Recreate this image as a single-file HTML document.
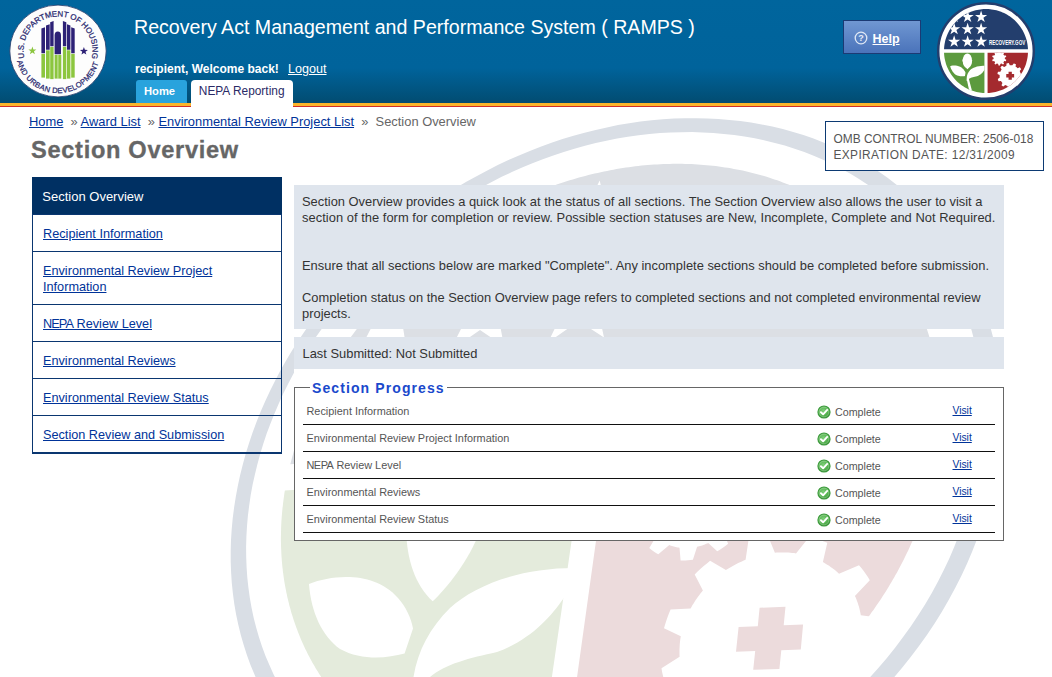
<!DOCTYPE html>
<html><head><meta charset="utf-8"><title>RAMPS - Section Overview</title>
<style>
*{margin:0;padding:0;box-sizing:border-box}
html,body{width:1052px;height:677px;overflow:hidden;background:#fff}
body{position:relative;font-family:"Liberation Sans",sans-serif;color:#333}
.abs{position:absolute;white-space:nowrap}
a{color:#003399;text-decoration:underline}
#hdr{position:absolute;left:0;top:0;width:1052px;height:103px;background:linear-gradient(#00659d 0px,#00639b 68px,#024c71 103px)}
#orange{position:absolute;left:0;top:103px;width:1052px;height:3px;background:#fbb42a}
#red{position:absolute;left:0;top:106px;width:1052px;height:1px;background:#cf2e2a}
#wm{position:absolute;left:0;top:0;width:1052px;height:677px}
#title{left:134px;top:14px;font-size:19.6px;color:#fff;line-height:26px}
#welcome{left:135px;top:61px;font-size:12px;font-weight:bold;color:#fff;line-height:16px}
#logout{left:288px;top:61px;font-size:12.6px;color:#fff;line-height:16px}
#logout a{color:#fff}
#tabhome{left:136px;top:80px;width:51px;height:23px;background:#29a3dd;border-radius:3px 3px 0 0}
#tabhome span{position:absolute;left:8px;top:3px;font-size:11.2px;font-weight:bold;color:#fff;line-height:16px}
#tabnepa{left:191px;top:80px;width:102px;height:27px;background:#fff;border-radius:4px 4px 0 0}
#tabnepa span{position:absolute;left:7.8px;top:3px;font-size:11.9px;color:#2a2a66;line-height:16px}
#help{left:843px;top:20px;width:78px;height:34px;border:1px solid #1b3a74;background:linear-gradient(#7097d2,#4a73ba)}
#bc{left:29px;top:114px;font-size:12.9px;line-height:16px;color:#666}
#h1{left:31px;top:135px;font-size:23.6px;font-weight:bold;color:#666;-webkit-text-stroke:0.35px #666;letter-spacing:0.7px;line-height:30px}
#omb{left:825px;top:121px;width:219px;height:50px;border:1px solid #0c3a73;background:#fff;font-size:11.9px;color:#555;line-height:15.5px;padding:10px 0 0 7.5px}
#nav{left:32px;top:177px;width:250px;height:277px;border-left:1px solid #0a3670;border-right:1px solid #0a3670;border-bottom:2px solid #0a3670}
#nav .hd{position:absolute;left:-1px;top:0;width:250px;height:37px;background:#003063}
#nav .hd span{position:absolute;left:10.3px;top:12px;font-size:13px;color:#fff;line-height:16px}
.ni{position:absolute;left:0;width:248px;border-top:1px solid #0a3670}
.ni a{position:absolute;left:10px;top:11px;font-size:12.7px;line-height:16px;white-space:normal}
#info{left:294px;top:185px;width:710px;height:144px;background:#dfe5ed;font-size:12.9px;line-height:16px;color:#333;padding:9px 0 0 8px;white-space:normal}
#last{left:294px;top:337px;width:710px;height:32px;background:#dfe5ed;font-size:12.9px;line-height:16px;color:#333;padding:8.5px 0 0 8.5px}
#fs{left:294px;top:387px;width:710px;height:154px;border:1px solid #666;background:#fff}
#legend{left:310px;top:379px;padding:0 2px 0 2px;background:#fff;font-size:14px;font-weight:bold;color:#1a49cc;letter-spacing:1.1px;line-height:18px}
.row{position:absolute;left:303px;width:692px;height:27px;border-bottom:1px solid #111}
.row .t{position:absolute;left:3.5px;top:5.7px;font-size:10.9px;color:#555;line-height:14px}
.row .c{position:absolute;left:532px;top:7.2px;font-size:10.7px;color:#555;line-height:14px}
.row .ic{position:absolute;left:514px;top:6.8px;width:14px;height:14px}
.row .v{position:absolute;left:649.5px;top:5.6px;font-size:10.3px;line-height:14px}
</style></head>
<body>
<svg id="wm" width="1052" height="677"><defs><clipPath id="c_flag"><path d="M290.3 464.3 L291.1 461.3 L291.9 458.3 L292.7 455.3 L293.5 452.3 L294.4 449.3 L295.3 446.4 L296.3 443.4 L297.2 440.4 L298.2 437.4 L299.2 434.5 L300.3 431.5 L301.4 428.6 L302.5 425.6 L303.6 422.7 L304.8 419.8 L306.0 416.9 L307.2 413.9 L308.4 411.0 L309.7 408.1 L311.0 405.2 L312.3 402.3 L313.6 399.5 L315.0 396.6 L316.4 393.7 L317.8 390.9 L319.3 388.0 L320.8 385.2 L322.3 382.4 L323.8 379.6 L325.4 376.8 L326.9 374.0 L328.5 371.2 L330.2 368.4 L331.8 365.6 L333.5 362.9 L335.2 360.1 L336.9 357.4 L338.7 354.7 L340.4 352.0 L342.2 349.3 L344.1 346.6 L345.9 343.9 L347.8 341.3 L349.7 338.6 L351.6 336.0 L353.5 333.4 L355.5 330.8 L357.4 328.2 L359.4 325.6 L361.5 323.0 L363.5 320.5 L365.6 317.9 L367.6 315.4 L369.8 312.9 L371.9 310.4 L374.0 307.9 L376.2 305.5 L378.4 303.0 L380.6 300.6 L382.8 298.2 L385.1 295.8 L387.3 293.4 L389.6 291.0 L391.9 288.7 L394.2 286.3 L396.6 284.0 L398.9 281.7 L401.3 279.5 L403.7 277.2 L406.1 274.9 L408.6 272.7 L411.0 270.5 L413.5 268.3 L416.0 266.1 L418.5 264.0 L421.0 261.8 L423.5 259.7 L426.1 257.6 L428.7 255.6 L431.2 253.5 L433.8 251.5 L436.5 249.4 L439.1 247.4 L441.7 245.4 L444.4 243.5 L447.1 241.5 L449.8 239.6 L452.5 237.7 L455.2 235.9 L457.9 234.0 L460.7 232.2 L463.4 230.3 L466.2 228.5 L469.0 226.8 L471.8 225.0 L474.6 223.3 L477.4 221.6 L480.2 219.9 L483.1 218.2 L485.9 216.6 L488.8 215.0 L491.7 213.4 L494.6 211.8 L497.5 210.3 L500.4 208.7 L503.3 207.2 L506.2 205.8 L509.2 204.3 L512.1 202.9 L515.1 201.5 L518.1 200.1 L521.1 198.7 L524.0 197.4 L527.0 196.1 L530.0 194.8 L533.1 193.5 L536.1 192.3 L539.1 191.1 L542.1 189.9 L545.2 188.7 L548.2 187.6 L551.3 186.5 L554.3 185.4 L557.4 184.3 L560.5 183.3 L563.6 182.3 L566.6 181.3 L569.7 180.3 L572.8 179.4 L575.9 178.5 L579.0 177.6 L582.1 176.8 L585.2 175.9 L588.4 175.1 L591.5 174.3 L594.6 173.6 L597.7 172.9 L600.8 172.2 L604.0 171.5 L607.1 170.9 L610.2 170.3 L613.4 169.7 L616.5 169.1 L619.6 168.6 L622.8 168.1 L625.9 167.6 L629.0 167.2 L632.2 166.7 L635.3 166.3 L638.4 166.0 L641.6 165.6 L644.7 165.3 L647.8 165.1 L651.0 164.8 L654.1 164.6 L657.2 164.4 L660.4 164.2 L663.5 164.1 L666.6 164.0 L669.7 163.9 L672.8 163.8 L675.9 163.8 L679.0 163.8 L682.1 163.8 L685.2 163.9 L688.3 164.0 L691.4 164.1 L694.5 164.3 L697.5 164.4 L700.6 164.7 L703.7 164.9 L706.7 165.2 L709.8 165.4 L712.8 165.8 L715.8 166.1 L718.8 166.5 L721.9 166.9 L724.9 167.4 L727.9 167.8 L730.9 168.3 L733.8 168.9 L736.8 169.4 L739.8 170.0 L742.7 170.6 L745.7 171.3 L748.6 171.9 L751.5 172.7 L754.4 173.4 L757.3 174.2 L760.2 174.9 L763.1 175.8 L765.9 176.6 L768.8 177.5 L771.6 178.4 L774.4 179.4 L777.2 180.3 L780.0 181.3 L782.8 182.4 L785.5 183.4 L788.3 184.5 L791.0 185.6 L793.7 186.8 L796.4 187.9 L799.1 189.1 L801.8 190.4 L804.4 191.6 L807.1 192.9 L809.7 194.2 L812.3 195.6 L814.9 197.0 L817.5 198.4 L820.0 199.8 L822.5 201.3 L825.0 202.8 L827.5 204.3 L830.0 205.8 L832.4 207.4 L834.9 209.0 L837.3 210.7 L839.7 212.3 L842.0 214.0 L844.4 215.7 L846.7 217.5 L849.0 219.2 L851.3 221.0 L853.6 222.9 L855.8 224.7 L858.0 226.6 L860.2 228.5 L862.4 230.4 L864.5 232.4 L866.6 234.4 L868.7 236.4 L870.8 238.5 L872.8 240.5 L874.8 242.6 L876.8 244.7 L878.8 246.9 L880.7 249.1 L882.7 251.3 L884.5 253.5 L886.4 255.7 L888.2 258.0 L890.0 260.3 L891.8 262.6 L893.6 265.0 L895.3 267.3 L897.0 269.7 L898.7 272.1 L900.3 274.6 L901.9 277.1 L903.5 279.5 L905.0 282.1 L906.5 284.6 L908.0 287.1 L909.5 289.7 L910.9 292.3 L912.3 294.9 L913.7 297.6 L915.0 300.3 L916.3 302.9 L917.6 305.7 L918.8 308.4 L920.0 311.1 L921.2 313.9 L922.3 316.7 L923.4 319.5 L924.5 322.3 L925.5 325.2 L926.5 328.1 L927.5 330.9 L928.4 333.8 L929.3 336.8 L930.2 339.7 L931.0 342.7 L931.8 345.6 L932.6 348.6 L933.3 351.6 L934.0 354.7 L934.7 357.7 L935.3 360.8 L935.9 363.8 L936.5 366.9 L937.0 370.0 L937.4 373.1 L937.9 376.3 L938.3 379.4 L938.7 382.6 L939.0 385.7 L939.3 388.9 L939.5 392.1 L939.8 395.3 L940.0 398.6 L940.1 401.8 L940.2 405.0 L940.3 408.3 L940.3 411.5 L940.3 414.8 L940.3 418.1 Z"/></clipPath><clipPath id="c_green"><path d="M284.9 490.4 L284.5 492.6 L284.2 494.8 L283.9 497.0 L283.6 499.2 L283.3 501.5 L283.0 503.7 L282.8 505.9 L282.5 508.1 L282.3 510.3 L282.1 512.5 L281.9 514.7 L281.7 516.9 L281.6 519.1 L281.4 521.3 L281.3 523.5 L281.2 525.7 L281.1 527.9 L281.1 530.1 L281.0 532.3 L281.0 534.5 L280.9 536.7 L280.9 538.9 L280.9 541.1 L281.0 543.3 L281.0 545.4 L281.1 547.6 L281.2 549.8 L281.3 552.0 L281.4 554.2 L281.5 556.3 L281.7 558.5 L281.8 560.7 L282.0 562.8 L282.2 565.0 L282.4 567.1 L282.7 569.3 L282.9 571.4 L283.2 573.6 L283.5 575.7 L283.8 577.9 L284.1 580.0 L284.4 582.1 L284.8 584.2 L285.2 586.4 L285.6 588.5 L286.0 590.6 L286.4 592.7 L286.9 594.8 L287.3 596.9 L287.8 599.0 L288.3 601.1 L288.8 603.1 L289.3 605.2 L289.9 607.3 L290.5 609.3 L291.0 611.4 L291.6 613.4 L292.3 615.5 L292.9 617.5 L293.5 619.6 L294.2 621.6 L294.9 623.6 L295.6 625.6 L296.3 627.6 L297.1 629.6 L297.8 631.6 L298.6 633.6 L299.4 635.6 L300.2 637.5 L301.0 639.5 L301.9 641.5 L302.8 643.4 L303.6 645.3 L304.5 647.3 L305.4 649.2 L306.4 651.1 L307.3 653.0 L308.3 654.9 L309.3 656.8 L310.3 658.7 L311.3 660.5 L312.3 662.4 L313.4 664.2 L314.5 666.1 L315.5 667.9 L316.6 669.7 L317.8 671.6 L318.9 673.4 L320.1 675.2 L321.2 676.9 L322.4 678.7 L323.6 680.5 L324.9 682.2 L326.1 684.0 L327.4 685.7 L328.6 687.4 L329.9 689.1 L331.2 690.8 L332.5 692.5 L333.9 694.2 L335.2 695.9 L336.6 697.5 L338.0 699.2 L339.4 700.8 L340.8 702.4 L342.3 704.0 L343.7 705.6 L345.2 707.2 L346.7 708.8 L348.2 710.3 L349.7 711.9 L351.2 713.4 L352.8 714.9 L354.4 716.5 L355.9 717.9 L357.5 719.4 L359.2 720.9 L360.8 722.4 L362.4 723.8 L364.1 725.2 L365.8 726.6 L367.5 728.0 L369.2 729.4 L370.9 730.8 L372.6 732.2 L374.4 733.5 L376.1 734.9 L377.9 736.2 L379.7 737.5 L381.5 738.8 L383.4 740.0 L385.2 741.3 L387.1 742.5 L388.9 743.8 L390.8 745.0 L392.7 746.2 L394.6 747.4 L396.5 748.5 L398.5 749.7 L400.4 750.8 L402.4 751.9 L404.4 753.0 L406.4 754.1 L408.4 755.2 L410.4 756.3 L412.4 757.3 L414.5 758.3 L416.5 759.3 L418.6 760.3 L420.7 761.3 L422.8 762.3 L424.9 763.2 L427.0 764.1 L429.2 765.0 L431.3 765.9 L433.5 766.8 L435.7 767.7 L437.8 768.5 L440.0 769.3 L442.2 770.1 L444.5 770.9 L446.7 771.7 L448.9 772.4 L451.2 773.2 L453.5 773.9 L455.7 774.6 L458.0 775.3 L460.3 775.9 L462.6 776.6 L464.9 777.2 L467.3 777.8 L469.6 778.4 L471.9 779.0 L474.3 779.5 L476.7 780.1 L479.0 780.6 L481.4 781.1 L483.8 781.6 L486.2 782.0 L488.6 782.5 L491.1 782.9 L493.5 783.3 L495.9 783.7 L498.4 784.0 L500.8 784.4 L503.3 784.7 L505.8 785.0 L508.3 785.3 L510.7 785.6 L513.2 785.8 L515.7 786.1 L518.3 786.3 L520.8 786.5 L523.3 786.6 L525.8 786.8 L528.4 786.9 L530.9 787.0 L533.5 787.1 L536.0 787.2 L581.7 470.7 Z"/></clipPath><clipPath id="c_red"><path d="M938.3 446.9 L938.0 449.4 L937.7 451.8 L937.3 454.3 L937.0 456.8 L936.6 459.2 L936.2 461.7 L935.8 464.2 L935.3 466.6 L934.9 469.1 L934.4 471.6 L933.9 474.1 L933.3 476.6 L932.8 479.0 L932.2 481.5 L931.6 484.0 L931.0 486.5 L930.4 489.0 L929.8 491.4 L929.1 493.9 L928.4 496.4 L927.7 498.9 L927.0 501.4 L926.2 503.9 L925.4 506.3 L924.6 508.8 L923.8 511.3 L923.0 513.8 L922.1 516.3 L921.3 518.7 L920.4 521.2 L919.4 523.7 L918.5 526.1 L917.6 528.6 L916.6 531.1 L915.6 533.5 L914.6 536.0 L913.5 538.4 L912.5 540.9 L911.4 543.3 L910.3 545.8 L909.2 548.2 L908.1 550.7 L906.9 553.1 L905.7 555.5 L904.5 558.0 L903.3 560.4 L902.1 562.8 L900.8 565.2 L899.6 567.6 L898.3 570.0 L897.0 572.4 L895.6 574.8 L894.3 577.2 L892.9 579.6 L891.5 581.9 L890.1 584.3 L888.7 586.7 L887.3 589.0 L885.8 591.4 L884.3 593.7 L882.8 596.0 L881.3 598.4 L879.8 600.7 L878.2 603.0 L876.6 605.3 L875.1 607.6 L873.5 609.9 L871.8 612.1 L870.2 614.4 L868.5 616.7 L866.9 618.9 L865.2 621.2 L863.5 623.4 L861.7 625.6 L860.0 627.8 L858.2 630.0 L856.4 632.2 L854.6 634.4 L852.8 636.6 L851.0 638.8 L849.2 640.9 L847.3 643.1 L845.4 645.2 L843.5 647.3 L841.6 649.4 L839.7 651.5 L837.8 653.6 L835.8 655.7 L833.9 657.8 L831.9 659.8 L829.9 661.9 L827.9 663.9 L825.8 665.9 L823.8 667.9 L821.7 669.9 L819.7 671.9 L817.6 673.9 L815.5 675.8 L813.4 677.7 L811.2 679.7 L809.1 681.6 L807.0 683.5 L804.8 685.4 L802.6 687.2 L800.4 689.1 L798.2 691.0 L796.0 692.8 L793.8 694.6 L791.5 696.4 L789.3 698.2 L787.0 700.0 L784.7 701.7 L782.4 703.5 L780.1 705.2 L777.8 706.9 L775.5 708.6 L773.2 710.3 L770.8 711.9 L768.5 713.6 L766.1 715.2 L763.7 716.8 L761.4 718.4 L759.0 720.0 L756.6 721.6 L754.1 723.1 L751.7 724.7 L749.3 726.2 L746.8 727.7 L744.4 729.2 L741.9 730.7 L739.5 732.1 L737.0 733.5 L734.5 735.0 L732.0 736.4 L729.5 737.7 L727.0 739.1 L724.5 740.5 L722.0 741.8 L719.4 743.1 L716.9 744.4 L714.4 745.7 L711.8 746.9 L709.2 748.2 L706.7 749.4 L704.1 750.6 L701.5 751.8 L699.0 752.9 L696.4 754.1 L693.8 755.2 L691.2 756.3 L688.6 757.4 L686.0 758.5 L683.4 759.5 L680.8 760.6 L678.2 761.6 L675.5 762.6 L672.9 763.6 L670.3 764.5 L667.6 765.5 L665.0 766.4 L662.4 767.3 L659.7 768.2 L657.1 769.0 L654.4 769.9 L651.8 770.7 L649.2 771.5 L646.5 772.3 L643.8 773.0 L641.2 773.8 L638.5 774.5 L635.9 775.2 L633.2 775.9 L630.6 776.6 L627.9 777.2 L625.2 777.8 L622.6 778.4 L619.9 779.0 L617.3 779.6 L614.6 780.1 L612.0 780.7 L609.3 781.2 L606.6 781.6 L604.0 782.1 L601.3 782.6 L598.7 783.0 L596.0 783.4 L593.4 783.8 L590.7 784.1 L588.1 784.5 L585.5 784.8 L582.8 785.1 L580.2 785.4 L577.5 785.7 L574.9 785.9 L572.3 786.1 L569.7 786.3 L567.0 786.5 L564.4 786.7 L561.8 786.8 L606.0 469.0 Z"/></clipPath><clipPath id="c_r93"><path d="M970.8 430.3 L969.9 441.5 L968.6 452.8 L966.9 464.2 L964.8 475.6 L962.3 487.0 L959.4 498.5 L956.1 509.9 L952.3 521.3 L948.2 532.7 L943.7 544.1 L938.8 555.4 L933.5 566.6 L927.9 577.8 L921.8 588.8 L915.4 599.8 L908.6 610.6 L901.5 621.2 L894.0 631.7 L886.1 642.1 L878.0 652.2 L869.5 662.2 L860.7 671.9 L851.6 681.4 L842.2 690.7 L832.5 699.7 L822.6 708.5 L812.4 717.0 L801.9 725.2 L791.3 733.1 L780.4 740.7 L769.3 748.0 L758.1 755.0 L746.7 761.6 L735.1 767.9 L723.4 773.8 L711.5 779.4 L699.6 784.6 L687.5 789.5 L675.4 794.0 L663.2 798.1 L651.0 801.8 L638.8 805.1 L626.5 808.0 L614.2 810.6 L602.0 812.8 L589.8 814.5 L577.6 815.9 L565.5 816.9 L553.5 817.5 L541.6 817.7 L529.8 817.5 L518.0 816.9 L506.5 816.0 L495.1 814.6 L483.8 812.9 L472.7 810.8 L461.8 808.4 L451.1 805.6 L440.6 802.4 L430.3 798.9 L420.2 795.1 L410.4 790.9 L400.8 786.4 L391.5 781.6 L382.4 776.4 L373.6 771.0 L365.1 765.3 L356.9 759.3 L348.9 753.0 L341.3 746.4 L333.9 739.6 L326.9 732.6 L320.2 725.3 L313.8 717.7 L307.7 710.0 L302.0 702.0 L296.5 693.9 L291.4 685.5 L286.7 677.0 L282.2 668.3 L278.1 659.5 L274.4 650.5 L271.0 641.3 L267.9 632.1 L265.1 622.7 L262.7 613.2 L260.7 603.6 L258.9 593.9 L257.5 584.1 L256.4 574.3 L255.7 564.4 L255.3 554.5 L255.2 544.5 L255.5 534.4 L256.0 524.4 L256.9 514.3 L258.1 504.2 L259.6 494.1 L261.5 484.1 L263.6 474.0 L266.0 464.0 L268.8 454.0 L271.8 444.0 L275.1 434.1 L278.7 424.3 L282.6 414.5 L286.8 404.8 L291.2 395.2 L295.9 385.6 L300.9 376.2 L306.1 366.8 L311.6 357.6 L317.3 348.5 L323.3 339.5 L329.5 330.6 L335.9 321.8 L342.6 313.2 L349.5 304.8 L356.6 296.5 L363.9 288.3 L371.4 280.3 L379.1 272.5 L387.0 264.9 L395.1 257.4 L403.3 250.1 L411.8 243.1 L420.4 236.2 L429.1 229.5 L438.0 223.0 L447.1 216.7 L456.3 210.7 L465.6 204.8 L475.1 199.2 L484.6 193.9 L494.3 188.7 L504.1 183.8 L514.0 179.1 L524.0 174.7 L534.0 170.6 L544.2 166.6 L554.4 163.0 L564.6 159.6 L574.9 156.5 L585.3 153.6 L595.7 151.0 L606.1 148.7 L616.6 146.7 L627.1 144.9 L637.5 143.4 L648.0 142.3 L658.5 141.4 L668.9 140.8 L679.3 140.4 L689.7 140.4 L700.0 140.7 L710.3 141.3 L720.5 142.2 L730.6 143.3 L740.7 144.8 L750.6 146.6 L760.5 148.7 L770.3 151.1 L779.9 153.8 L789.4 156.8 L798.8 160.1 L808.0 163.7 L817.1 167.6 L826.0 171.8 L834.7 176.3 L843.3 181.1 L851.6 186.2 L859.7 191.6 L867.7 197.3 L875.4 203.3 L882.9 209.5 L890.1 216.1 L897.1 222.9 L903.8 230.0 L910.3 237.3 L916.5 245.0 L922.3 252.8 L927.9 261.0 L933.2 269.4 L938.2 278.0 L942.9 286.8 L947.2 295.9 L951.2 305.2 L954.9 314.7 L958.2 324.4 L961.1 334.3 L963.7 344.4 L965.9 354.6 L967.8 365.0 L969.3 375.6 L970.3 386.3 L971.0 397.1 L971.3 408.1 L971.2 419.1 L970.8 430.3 Z"/></clipPath></defs>
<path fill="#d9dee5" fill-rule="evenodd" d="M1000.9 428.2 L1000.0 440.4 L998.7 452.6 L996.9 464.8 L994.7 477.2 L992.1 489.5 L989.0 501.9 L985.5 514.3 L981.5 526.7 L977.1 539.0 L972.3 551.3 L967.1 563.6 L961.4 575.7 L955.3 587.8 L948.8 599.8 L941.9 611.7 L934.6 623.4 L926.9 634.9 L918.8 646.3 L910.3 657.6 L901.5 668.6 L892.3 679.4 L882.8 689.9 L872.9 700.2 L862.8 710.3 L852.3 720.1 L841.5 729.6 L830.5 738.8 L819.2 747.7 L807.6 756.3 L795.8 764.5 L783.8 772.4 L771.6 779.9 L759.3 787.1 L746.7 793.9 L734.0 800.3 L721.2 806.4 L708.2 812.0 L695.2 817.2 L682.0 822.0 L668.8 826.4 L655.6 830.4 L642.3 834.0 L629.0 837.1 L615.8 839.8 L602.5 842.1 L589.3 844.0 L576.1 845.4 L563.0 846.4 L550.0 847.0 L537.2 847.2 L524.4 846.9 L511.7 846.2 L499.2 845.1 L486.9 843.6 L474.8 841.7 L462.8 839.3 L451.0 836.6 L439.5 833.5 L428.2 830.0 L417.1 826.2 L406.3 822.0 L395.7 817.4 L385.4 812.4 L375.4 807.2 L365.7 801.5 L356.3 795.6 L347.1 789.4 L338.3 782.8 L329.8 776.0 L321.6 768.8 L313.8 761.4 L306.3 753.7 L299.1 745.8 L292.3 737.7 L285.8 729.3 L279.7 720.7 L274.0 711.8 L268.5 702.8 L263.5 693.6 L258.8 684.2 L254.5 674.6 L250.5 664.9 L246.9 655.1 L243.7 645.1 L240.8 635.0 L238.3 624.7 L236.1 614.4 L234.3 604.0 L232.9 593.5 L231.8 582.9 L231.1 572.2 L230.7 561.6 L230.7 550.8 L231.0 540.0 L231.7 529.3 L232.7 518.5 L234.1 507.6 L235.8 496.8 L237.8 486.0 L240.1 475.3 L242.8 464.5 L245.7 453.8 L249.0 443.2 L252.6 432.6 L256.5 422.1 L260.7 411.6 L265.2 401.2 L270.0 390.9 L275.1 380.7 L280.4 370.6 L286.1 360.6 L291.9 350.8 L298.1 341.0 L304.5 331.4 L311.2 321.9 L318.1 312.6 L325.2 303.4 L332.6 294.4 L340.2 285.5 L348.0 276.8 L356.0 268.3 L364.3 259.9 L372.7 251.8 L381.3 243.8 L390.2 236.0 L399.2 228.5 L408.4 221.1 L417.7 214.0 L427.2 207.1 L436.9 200.4 L446.7 193.9 L456.7 187.6 L466.8 181.6 L477.0 175.9 L487.3 170.4 L497.8 165.1 L508.4 160.1 L519.0 155.4 L529.8 150.9 L540.6 146.7 L551.5 142.8 L562.5 139.1 L573.5 135.7 L584.6 132.7 L595.7 129.9 L606.9 127.4 L618.0 125.1 L629.2 123.2 L640.4 121.6 L651.6 120.3 L662.8 119.3 L674.0 118.6 L685.2 118.2 L696.3 118.2 L707.4 118.4 L718.4 119.0 L729.3 119.9 L740.2 121.1 L751.0 122.6 L761.7 124.4 L772.3 126.6 L782.8 129.1 L793.2 132.0 L803.4 135.1 L813.5 138.6 L823.4 142.4 L833.2 146.5 L842.8 151.0 L852.2 155.8 L861.5 160.9 L870.5 166.3 L879.3 172.0 L887.9 178.1 L896.2 184.4 L904.3 191.1 L912.2 198.1 L919.7 205.3 L927.1 212.9 L934.1 220.8 L940.8 228.9 L947.2 237.4 L953.3 246.1 L959.1 255.0 L964.5 264.3 L969.7 273.8 L974.4 283.5 L978.8 293.5 L982.8 303.7 L986.5 314.1 L989.7 324.8 L992.6 335.6 L995.1 346.6 L997.2 357.8 L998.9 369.2 L1000.1 380.8 L1000.9 392.4 L1001.4 404.3 L1001.3 416.2 L1000.9 428.2 Z M981.9 429.5 L982.4 418.0 L982.5 406.7 L982.1 395.4 L981.4 384.2 L980.2 373.2 L978.7 362.4 L976.8 351.7 L974.4 341.1 L971.7 330.8 L968.7 320.6 L965.2 310.6 L961.4 300.9 L957.3 291.3 L952.8 282.0 L948.0 272.9 L942.8 264.0 L937.4 255.4 L931.6 247.1 L925.5 239.0 L919.1 231.2 L912.4 223.6 L905.5 216.4 L898.3 209.4 L890.8 202.7 L883.1 196.3 L875.2 190.1 L867.0 184.3 L858.6 178.8 L850.0 173.6 L841.2 168.7 L832.2 164.0 L823.1 159.7 L813.7 155.8 L804.3 152.1 L794.6 148.7 L784.8 145.6 L774.9 142.9 L764.9 140.5 L754.8 138.3 L744.5 136.5 L734.2 135.0 L723.8 133.9 L713.3 133.0 L702.7 132.4 L692.1 132.1 L681.5 132.2 L670.8 132.5 L660.1 133.1 L649.4 134.1 L638.6 135.3 L627.9 136.8 L617.1 138.6 L606.4 140.8 L595.7 143.1 L585.0 145.8 L574.4 148.7 L563.8 152.0 L553.3 155.5 L542.8 159.2 L532.4 163.2 L522.1 167.5 L511.9 172.1 L501.7 176.8 L491.7 181.9 L481.8 187.2 L472.0 192.7 L462.3 198.4 L452.7 204.4 L443.3 210.6 L434.0 217.1 L424.9 223.7 L415.9 230.6 L407.1 237.6 L398.4 244.9 L390.0 252.3 L381.7 260.0 L373.6 267.8 L365.7 275.8 L358.0 284.0 L350.5 292.4 L343.2 300.9 L336.1 309.6 L329.3 318.4 L322.7 327.4 L316.3 336.5 L310.2 345.7 L304.3 355.0 L298.6 364.5 L293.3 374.1 L288.2 383.8 L283.3 393.6 L278.8 403.5 L274.5 413.4 L270.5 423.5 L266.7 433.6 L263.3 443.7 L260.2 453.9 L257.4 464.2 L254.9 474.5 L252.6 484.8 L250.7 495.1 L249.2 505.5 L247.9 515.8 L247.0 526.2 L246.4 536.5 L246.1 546.8 L246.2 557.1 L246.6 567.3 L247.3 577.5 L248.4 587.6 L249.8 597.7 L251.5 607.6 L253.6 617.5 L256.1 627.3 L258.9 636.9 L262.0 646.4 L265.5 655.9 L269.4 665.1 L273.5 674.2 L278.1 683.2 L282.9 692.0 L288.1 700.5 L293.7 708.9 L299.6 717.1 L305.8 725.1 L312.4 732.9 L319.3 740.4 L326.5 747.7 L334.0 754.7 L341.8 761.5 L350.0 768.0 L358.4 774.2 L367.2 780.1 L376.2 785.7 L385.5 791.1 L395.1 796.0 L404.9 800.7 L415.1 805.0 L425.4 809.0 L436.0 812.7 L446.8 815.9 L457.8 818.8 L469.0 821.4 L480.4 823.6 L492.0 825.3 L503.8 826.7 L515.7 827.8 L527.8 828.4 L539.9 828.6 L552.2 828.4 L564.6 827.8 L577.1 826.8 L589.6 825.4 L602.2 823.6 L614.8 821.4 L627.4 818.8 L640.1 815.8 L652.7 812.4 L665.3 808.6 L677.9 804.3 L690.4 799.7 L702.8 794.7 L715.1 789.4 L727.3 783.6 L739.4 777.5 L751.3 771.0 L763.1 764.2 L774.7 757.0 L786.1 749.5 L797.3 741.7 L808.3 733.5 L819.1 725.1 L829.6 716.3 L839.8 707.3 L849.8 698.0 L859.5 688.4 L868.8 678.6 L877.9 668.5 L886.7 658.3 L895.1 647.8 L903.1 637.1 L910.9 626.3 L918.2 615.3 L925.2 604.2 L931.8 592.9 L938.0 581.5 L943.8 570.0 L949.3 558.4 L954.3 546.8 L958.9 535.1 L963.1 523.3 L966.9 511.5 L970.3 499.7 L973.3 487.9 L975.9 476.2 L978.0 464.4 L979.7 452.7 L981.0 441.1 L981.9 429.5 Z"/>
<path id="q_flag" fill="#dcdfe4" d="M290.3 464.3 L291.1 461.3 L291.9 458.3 L292.7 455.3 L293.5 452.3 L294.4 449.3 L295.3 446.4 L296.3 443.4 L297.2 440.4 L298.2 437.4 L299.2 434.5 L300.3 431.5 L301.4 428.6 L302.5 425.6 L303.6 422.7 L304.8 419.8 L306.0 416.9 L307.2 413.9 L308.4 411.0 L309.7 408.1 L311.0 405.2 L312.3 402.3 L313.6 399.5 L315.0 396.6 L316.4 393.7 L317.8 390.9 L319.3 388.0 L320.8 385.2 L322.3 382.4 L323.8 379.6 L325.4 376.8 L326.9 374.0 L328.5 371.2 L330.2 368.4 L331.8 365.6 L333.5 362.9 L335.2 360.1 L336.9 357.4 L338.7 354.7 L340.4 352.0 L342.2 349.3 L344.1 346.6 L345.9 343.9 L347.8 341.3 L349.7 338.6 L351.6 336.0 L353.5 333.4 L355.5 330.8 L357.4 328.2 L359.4 325.6 L361.5 323.0 L363.5 320.5 L365.6 317.9 L367.6 315.4 L369.8 312.9 L371.9 310.4 L374.0 307.9 L376.2 305.5 L378.4 303.0 L380.6 300.6 L382.8 298.2 L385.1 295.8 L387.3 293.4 L389.6 291.0 L391.9 288.7 L394.2 286.3 L396.6 284.0 L398.9 281.7 L401.3 279.5 L403.7 277.2 L406.1 274.9 L408.6 272.7 L411.0 270.5 L413.5 268.3 L416.0 266.1 L418.5 264.0 L421.0 261.8 L423.5 259.7 L426.1 257.6 L428.7 255.6 L431.2 253.5 L433.8 251.5 L436.5 249.4 L439.1 247.4 L441.7 245.4 L444.4 243.5 L447.1 241.5 L449.8 239.6 L452.5 237.7 L455.2 235.9 L457.9 234.0 L460.7 232.2 L463.4 230.3 L466.2 228.5 L469.0 226.8 L471.8 225.0 L474.6 223.3 L477.4 221.6 L480.2 219.9 L483.1 218.2 L485.9 216.6 L488.8 215.0 L491.7 213.4 L494.6 211.8 L497.5 210.3 L500.4 208.7 L503.3 207.2 L506.2 205.8 L509.2 204.3 L512.1 202.9 L515.1 201.5 L518.1 200.1 L521.1 198.7 L524.0 197.4 L527.0 196.1 L530.0 194.8 L533.1 193.5 L536.1 192.3 L539.1 191.1 L542.1 189.9 L545.2 188.7 L548.2 187.6 L551.3 186.5 L554.3 185.4 L557.4 184.3 L560.5 183.3 L563.6 182.3 L566.6 181.3 L569.7 180.3 L572.8 179.4 L575.9 178.5 L579.0 177.6 L582.1 176.8 L585.2 175.9 L588.4 175.1 L591.5 174.3 L594.6 173.6 L597.7 172.9 L600.8 172.2 L604.0 171.5 L607.1 170.9 L610.2 170.3 L613.4 169.7 L616.5 169.1 L619.6 168.6 L622.8 168.1 L625.9 167.6 L629.0 167.2 L632.2 166.7 L635.3 166.3 L638.4 166.0 L641.6 165.6 L644.7 165.3 L647.8 165.1 L651.0 164.8 L654.1 164.6 L657.2 164.4 L660.4 164.2 L663.5 164.1 L666.6 164.0 L669.7 163.9 L672.8 163.8 L675.9 163.8 L679.0 163.8 L682.1 163.8 L685.2 163.9 L688.3 164.0 L691.4 164.1 L694.5 164.3 L697.5 164.4 L700.6 164.7 L703.7 164.9 L706.7 165.2 L709.8 165.4 L712.8 165.8 L715.8 166.1 L718.8 166.5 L721.9 166.9 L724.9 167.4 L727.9 167.8 L730.9 168.3 L733.8 168.9 L736.8 169.4 L739.8 170.0 L742.7 170.6 L745.7 171.3 L748.6 171.9 L751.5 172.7 L754.4 173.4 L757.3 174.2 L760.2 174.9 L763.1 175.8 L765.9 176.6 L768.8 177.5 L771.6 178.4 L774.4 179.4 L777.2 180.3 L780.0 181.3 L782.8 182.4 L785.5 183.4 L788.3 184.5 L791.0 185.6 L793.7 186.8 L796.4 187.9 L799.1 189.1 L801.8 190.4 L804.4 191.6 L807.1 192.9 L809.7 194.2 L812.3 195.6 L814.9 197.0 L817.5 198.4 L820.0 199.8 L822.5 201.3 L825.0 202.8 L827.5 204.3 L830.0 205.8 L832.4 207.4 L834.9 209.0 L837.3 210.7 L839.7 212.3 L842.0 214.0 L844.4 215.7 L846.7 217.5 L849.0 219.2 L851.3 221.0 L853.6 222.9 L855.8 224.7 L858.0 226.6 L860.2 228.5 L862.4 230.4 L864.5 232.4 L866.6 234.4 L868.7 236.4 L870.8 238.5 L872.8 240.5 L874.8 242.6 L876.8 244.7 L878.8 246.9 L880.7 249.1 L882.7 251.3 L884.5 253.5 L886.4 255.7 L888.2 258.0 L890.0 260.3 L891.8 262.6 L893.6 265.0 L895.3 267.3 L897.0 269.7 L898.7 272.1 L900.3 274.6 L901.9 277.1 L903.5 279.5 L905.0 282.1 L906.5 284.6 L908.0 287.1 L909.5 289.7 L910.9 292.3 L912.3 294.9 L913.7 297.6 L915.0 300.3 L916.3 302.9 L917.6 305.7 L918.8 308.4 L920.0 311.1 L921.2 313.9 L922.3 316.7 L923.4 319.5 L924.5 322.3 L925.5 325.2 L926.5 328.1 L927.5 330.9 L928.4 333.8 L929.3 336.8 L930.2 339.7 L931.0 342.7 L931.8 345.6 L932.6 348.6 L933.3 351.6 L934.0 354.7 L934.7 357.7 L935.3 360.8 L935.9 363.8 L936.5 366.9 L937.0 370.0 L937.4 373.1 L937.9 376.3 L938.3 379.4 L938.7 382.6 L939.0 385.7 L939.3 388.9 L939.5 392.1 L939.8 395.3 L940.0 398.6 L940.1 401.8 L940.2 405.0 L940.3 408.3 L940.3 411.5 L940.3 414.8 L940.3 418.1 Z"/>
<path id="q_green" fill="#e4ebdc" d="M284.9 490.4 L284.5 492.6 L284.2 494.8 L283.9 497.0 L283.6 499.2 L283.3 501.5 L283.0 503.7 L282.8 505.9 L282.5 508.1 L282.3 510.3 L282.1 512.5 L281.9 514.7 L281.7 516.9 L281.6 519.1 L281.4 521.3 L281.3 523.5 L281.2 525.7 L281.1 527.9 L281.1 530.1 L281.0 532.3 L281.0 534.5 L280.9 536.7 L280.9 538.9 L280.9 541.1 L281.0 543.3 L281.0 545.4 L281.1 547.6 L281.2 549.8 L281.3 552.0 L281.4 554.2 L281.5 556.3 L281.7 558.5 L281.8 560.7 L282.0 562.8 L282.2 565.0 L282.4 567.1 L282.7 569.3 L282.9 571.4 L283.2 573.6 L283.5 575.7 L283.8 577.9 L284.1 580.0 L284.4 582.1 L284.8 584.2 L285.2 586.4 L285.6 588.5 L286.0 590.6 L286.4 592.7 L286.9 594.8 L287.3 596.9 L287.8 599.0 L288.3 601.1 L288.8 603.1 L289.3 605.2 L289.9 607.3 L290.5 609.3 L291.0 611.4 L291.6 613.4 L292.3 615.5 L292.9 617.5 L293.5 619.6 L294.2 621.6 L294.9 623.6 L295.6 625.6 L296.3 627.6 L297.1 629.6 L297.8 631.6 L298.6 633.6 L299.4 635.6 L300.2 637.5 L301.0 639.5 L301.9 641.5 L302.8 643.4 L303.6 645.3 L304.5 647.3 L305.4 649.2 L306.4 651.1 L307.3 653.0 L308.3 654.9 L309.3 656.8 L310.3 658.7 L311.3 660.5 L312.3 662.4 L313.4 664.2 L314.5 666.1 L315.5 667.9 L316.6 669.7 L317.8 671.6 L318.9 673.4 L320.1 675.2 L321.2 676.9 L322.4 678.7 L323.6 680.5 L324.9 682.2 L326.1 684.0 L327.4 685.7 L328.6 687.4 L329.9 689.1 L331.2 690.8 L332.5 692.5 L333.9 694.2 L335.2 695.9 L336.6 697.5 L338.0 699.2 L339.4 700.8 L340.8 702.4 L342.3 704.0 L343.7 705.6 L345.2 707.2 L346.7 708.8 L348.2 710.3 L349.7 711.9 L351.2 713.4 L352.8 714.9 L354.4 716.5 L355.9 717.9 L357.5 719.4 L359.2 720.9 L360.8 722.4 L362.4 723.8 L364.1 725.2 L365.8 726.6 L367.5 728.0 L369.2 729.4 L370.9 730.8 L372.6 732.2 L374.4 733.5 L376.1 734.9 L377.9 736.2 L379.7 737.5 L381.5 738.8 L383.4 740.0 L385.2 741.3 L387.1 742.5 L388.9 743.8 L390.8 745.0 L392.7 746.2 L394.6 747.4 L396.5 748.5 L398.5 749.7 L400.4 750.8 L402.4 751.9 L404.4 753.0 L406.4 754.1 L408.4 755.2 L410.4 756.3 L412.4 757.3 L414.5 758.3 L416.5 759.3 L418.6 760.3 L420.7 761.3 L422.8 762.3 L424.9 763.2 L427.0 764.1 L429.2 765.0 L431.3 765.9 L433.5 766.8 L435.7 767.7 L437.8 768.5 L440.0 769.3 L442.2 770.1 L444.5 770.9 L446.7 771.7 L448.9 772.4 L451.2 773.2 L453.5 773.9 L455.7 774.6 L458.0 775.3 L460.3 775.9 L462.6 776.6 L464.9 777.2 L467.3 777.8 L469.6 778.4 L471.9 779.0 L474.3 779.5 L476.7 780.1 L479.0 780.6 L481.4 781.1 L483.8 781.6 L486.2 782.0 L488.6 782.5 L491.1 782.9 L493.5 783.3 L495.9 783.7 L498.4 784.0 L500.8 784.4 L503.3 784.7 L505.8 785.0 L508.3 785.3 L510.7 785.6 L513.2 785.8 L515.7 786.1 L518.3 786.3 L520.8 786.5 L523.3 786.6 L525.8 786.8 L528.4 786.9 L530.9 787.0 L533.5 787.1 L536.0 787.2 L581.7 470.7 Z"/>
<path id="q_red" fill="#ecdbdc" d="M938.3 446.9 L938.0 449.4 L937.7 451.8 L937.3 454.3 L937.0 456.8 L936.6 459.2 L936.2 461.7 L935.8 464.2 L935.3 466.6 L934.9 469.1 L934.4 471.6 L933.9 474.1 L933.3 476.6 L932.8 479.0 L932.2 481.5 L931.6 484.0 L931.0 486.5 L930.4 489.0 L929.8 491.4 L929.1 493.9 L928.4 496.4 L927.7 498.9 L927.0 501.4 L926.2 503.9 L925.4 506.3 L924.6 508.8 L923.8 511.3 L923.0 513.8 L922.1 516.3 L921.3 518.7 L920.4 521.2 L919.4 523.7 L918.5 526.1 L917.6 528.6 L916.6 531.1 L915.6 533.5 L914.6 536.0 L913.5 538.4 L912.5 540.9 L911.4 543.3 L910.3 545.8 L909.2 548.2 L908.1 550.7 L906.9 553.1 L905.7 555.5 L904.5 558.0 L903.3 560.4 L902.1 562.8 L900.8 565.2 L899.6 567.6 L898.3 570.0 L897.0 572.4 L895.6 574.8 L894.3 577.2 L892.9 579.6 L891.5 581.9 L890.1 584.3 L888.7 586.7 L887.3 589.0 L885.8 591.4 L884.3 593.7 L882.8 596.0 L881.3 598.4 L879.8 600.7 L878.2 603.0 L876.6 605.3 L875.1 607.6 L873.5 609.9 L871.8 612.1 L870.2 614.4 L868.5 616.7 L866.9 618.9 L865.2 621.2 L863.5 623.4 L861.7 625.6 L860.0 627.8 L858.2 630.0 L856.4 632.2 L854.6 634.4 L852.8 636.6 L851.0 638.8 L849.2 640.9 L847.3 643.1 L845.4 645.2 L843.5 647.3 L841.6 649.4 L839.7 651.5 L837.8 653.6 L835.8 655.7 L833.9 657.8 L831.9 659.8 L829.9 661.9 L827.9 663.9 L825.8 665.9 L823.8 667.9 L821.7 669.9 L819.7 671.9 L817.6 673.9 L815.5 675.8 L813.4 677.7 L811.2 679.7 L809.1 681.6 L807.0 683.5 L804.8 685.4 L802.6 687.2 L800.4 689.1 L798.2 691.0 L796.0 692.8 L793.8 694.6 L791.5 696.4 L789.3 698.2 L787.0 700.0 L784.7 701.7 L782.4 703.5 L780.1 705.2 L777.8 706.9 L775.5 708.6 L773.2 710.3 L770.8 711.9 L768.5 713.6 L766.1 715.2 L763.7 716.8 L761.4 718.4 L759.0 720.0 L756.6 721.6 L754.1 723.1 L751.7 724.7 L749.3 726.2 L746.8 727.7 L744.4 729.2 L741.9 730.7 L739.5 732.1 L737.0 733.5 L734.5 735.0 L732.0 736.4 L729.5 737.7 L727.0 739.1 L724.5 740.5 L722.0 741.8 L719.4 743.1 L716.9 744.4 L714.4 745.7 L711.8 746.9 L709.2 748.2 L706.7 749.4 L704.1 750.6 L701.5 751.8 L699.0 752.9 L696.4 754.1 L693.8 755.2 L691.2 756.3 L688.6 757.4 L686.0 758.5 L683.4 759.5 L680.8 760.6 L678.2 761.6 L675.5 762.6 L672.9 763.6 L670.3 764.5 L667.6 765.5 L665.0 766.4 L662.4 767.3 L659.7 768.2 L657.1 769.0 L654.4 769.9 L651.8 770.7 L649.2 771.5 L646.5 772.3 L643.8 773.0 L641.2 773.8 L638.5 774.5 L635.9 775.2 L633.2 775.9 L630.6 776.6 L627.9 777.2 L625.2 777.8 L622.6 778.4 L619.9 779.0 L617.3 779.6 L614.6 780.1 L612.0 780.7 L609.3 781.2 L606.6 781.6 L604.0 782.1 L601.3 782.6 L598.7 783.0 L596.0 783.4 L593.4 783.8 L590.7 784.1 L588.1 784.5 L585.5 784.8 L582.8 785.1 L580.2 785.4 L577.5 785.7 L574.9 785.9 L572.3 786.1 L569.7 786.3 L567.0 786.5 L564.4 786.7 L561.8 786.8 L606.0 469.0 Z"/>
<g clip-path="url(#c_flag)"><path fill="#fff" d="M410.7 202.1 L415.2 228.9 L447.1 225.4 L417.9 245.7 L422.5 273.3 L400.0 258.3 L370.9 278.5 L386.2 249.1 L364.3 234.5 L395.6 231.1 Z M503.7 191.4 L509.0 218.6 L541.9 215.0 L512.3 235.6 L517.7 263.5 L494.0 248.4 L464.4 269.0 L479.5 239.1 L456.5 224.4 L488.8 220.8 Z M599.7 180.4 L605.9 208.0 L639.9 204.2 L609.7 225.2 L616.0 253.5 L591.1 238.2 L561.0 259.1 L575.9 228.8 L551.7 213.9 L585.1 210.2 Z M395.7 280.7 L400.1 308.6 L432.4 305.5 L402.8 326.1 L407.3 354.8 L384.5 338.9 L354.9 359.5 L370.6 329.1 L348.4 313.6 L380.2 310.5 Z M490.1 271.1 L495.3 299.4 L528.8 296.2 L498.6 317.2 L504.0 346.3 L480.0 330.1 L449.9 351.1 L465.4 320.3 L442.0 304.6 L474.9 301.4 Z M587.7 261.2 L593.8 289.9 L628.4 286.6 L597.7 307.9 L604.0 337.4 L578.7 321.1 L548.0 342.4 L563.3 311.1 L538.7 295.2 L572.6 291.9 Z M379.7 363.7 L384.1 392.9 L417.0 390.2 L386.8 411.2 L391.2 441.1 L368.1 424.1 L338.0 445.0 L354.1 413.7 L331.6 397.2 L363.9 394.5 Z M475.7 355.3 L480.9 384.9 L514.9 382.1 L484.2 403.5 L489.5 433.9 L465.2 416.6 L434.5 437.9 L450.3 406.1 L426.7 389.4 L460.1 386.6 Z M574.9 346.7 L581.0 376.7 L616.2 373.8 L584.9 395.5 L591.2 426.4 L565.5 408.9 L534.3 430.6 L549.9 398.3 L525.0 381.3 L559.5 378.5 Z"/></g>
<g clip-path="url(#c_r93)"><path fill="#fff" d="M679.6 656.7 L679.5 654.9 L679.5 653.0 L679.5 651.2 L679.5 649.3 L679.6 647.4 L679.7 645.6 L679.8 643.7 L680.0 641.8 L680.2 640.0 L680.5 638.1 L680.8 636.2 L664.0 628.2 L665.1 624.4 L666.3 620.7 L667.6 617.0 L669.0 613.3 L670.6 609.6 L690.6 608.5 L691.6 606.8 L692.5 605.1 L693.6 603.4 L694.6 601.7 L695.7 600.0 L696.8 598.4 L698.0 596.8 L699.2 595.2 L700.4 593.6 L701.7 592.0 L702.9 590.5 L694.7 574.4 L697.6 571.5 L700.6 568.7 L703.7 566.0 L706.9 563.4 L710.1 560.8 L725.9 570.1 L727.6 569.0 L729.3 567.9 L731.1 566.9 L732.8 565.9 L734.6 564.9 L736.4 564.0 L738.2 563.1 L740.0 562.2 L741.9 561.4 L743.7 560.6 L745.6 559.8 L748.4 540.7 L752.3 539.5 L756.2 538.4 L760.1 537.5 L764.0 536.7 L768.0 536.0 L774.9 552.8 L776.8 552.6 L778.8 552.5 L780.7 552.5 L782.6 552.5 L784.6 552.5 L786.5 552.5 L788.4 552.6 L790.3 552.8 L792.2 552.9 L794.1 553.1 L796.0 553.4 L809.2 537.0 L813.0 537.9 L816.6 539.0 L820.2 540.1 L823.8 541.4 L827.3 542.8 L822.9 562.1 L824.5 563.0 L826.0 563.9 L827.6 564.9 L829.1 565.8 L830.6 566.9 L832.1 567.9 L833.5 569.0 L834.9 570.1 L836.3 571.3 L837.7 572.5 L839.0 573.7 L859.0 565.3 L861.4 568.1 L863.7 571.0 L865.8 574.0 L867.9 577.0 L869.8 580.2 L854.9 595.9 L855.7 597.6 L856.4 599.2 L857.0 600.9 L857.7 602.7 L858.2 604.4 L858.8 606.2 L859.3 607.9 L859.7 609.7 L860.1 611.5 L860.5 613.4 L860.8 615.2 L881.5 618.0 L881.7 621.8 L881.8 625.7 L881.7 629.6 L881.5 633.5 L881.2 637.5 L860.2 644.2 L859.8 646.1 L859.4 648.0 L858.9 649.9 L858.4 651.9 L857.8 653.8 L857.2 655.7 L856.5 657.6 L855.8 659.5 L855.1 661.3 L854.3 663.2 L853.5 665.1 L868.0 678.6 L866.0 682.2 L863.8 685.9 L861.4 689.4 L858.9 692.9 L856.3 696.3 L836.1 691.4 L834.7 692.9 L833.2 694.4 L831.7 695.9 L830.2 697.4 L828.7 698.8 L827.1 700.3 L825.5 701.6 L823.8 703.0 L822.2 704.3 L820.5 705.6 L818.8 706.9 L822.2 726.8 L818.5 729.0 L814.7 731.2 L810.8 733.1 L806.9 735.0 L803.0 736.7 L790.3 721.5 L788.3 722.2 L786.3 722.8 L784.3 723.3 L782.3 723.9 L780.2 724.3 L778.2 724.8 L776.2 725.2 L774.2 725.5 L772.2 725.9 L770.1 726.1 L768.1 726.4 L759.5 746.1 L755.3 746.2 L751.3 746.0 L747.2 745.8 L743.2 745.4 L739.2 744.8 L738.1 724.6 L736.2 724.1 L734.4 723.6 L732.5 723.1 L730.7 722.5 L728.9 721.9 L727.2 721.2 L725.4 720.5 L723.7 719.8 L722.0 719.0 L720.3 718.2 L718.6 717.3 L701.1 730.5 L698.0 728.3 L695.0 726.1 L692.1 723.8 L689.3 721.3 L686.6 718.8 L697.0 700.1 L695.8 698.7 L694.7 697.3 L693.6 695.8 L692.6 694.4 L691.6 692.9 L690.6 691.4 L689.7 689.8 L688.8 688.3 L687.9 686.7 L687.1 685.1 L686.4 683.4 L665.9 686.1 L664.8 682.6 L663.8 679.1 L662.9 675.5 L662.1 671.9 L661.5 668.2 Z M708.2 543.0 L707.2 543.4 L706.2 543.8 L705.2 544.3 L704.2 544.7 L703.2 545.0 L702.2 545.4 L701.2 545.7 L700.1 546.0 L699.1 546.3 L698.1 546.6 L697.1 546.8 L692.9 559.8 L690.4 560.1 L687.9 560.3 L685.5 560.4 L683.0 560.5 L680.6 560.4 L679.5 547.8 L678.5 547.6 L677.6 547.5 L676.6 547.3 L675.6 547.1 L674.7 546.8 L673.8 546.6 L672.9 546.3 L671.9 546.0 L671.0 545.7 L670.2 545.4 L669.3 545.0 L658.3 554.3 L656.4 553.2 L654.5 552.0 L652.7 550.8 L651.0 549.4 L649.3 548.0 L656.4 536.0 L655.8 535.3 L655.3 534.6 L654.7 533.9 L654.2 533.2 L653.7 532.5 L653.2 531.7 L652.7 531.0 L652.3 530.2 L651.8 529.4 L651.4 528.6 L651.0 527.8 L637.6 530.1 L636.9 528.0 L636.4 525.9 L635.9 523.7 L635.6 521.5 L635.3 519.3 L647.7 512.5 L647.7 511.5 L647.8 510.6 L647.8 509.6 L647.9 508.7 L648.0 507.7 L648.1 506.8 L648.3 505.8 L648.4 504.9 L648.6 503.9 L648.8 503.0 L649.1 502.0 L638.3 496.6 L639.1 494.3 L640.1 492.1 L641.1 489.9 L642.2 487.7 L643.4 485.6 L656.4 486.2 L656.9 485.4 L657.6 484.5 L658.2 483.7 L658.8 482.9 L659.5 482.1 L660.2 481.3 L660.9 480.5 L661.6 479.7 L662.3 478.9 L663.1 478.2 L663.8 477.4 L659.7 466.5 L661.7 464.9 L663.8 463.3 L665.9 461.9 L668.1 460.5 L670.3 459.2 L678.9 467.0 L679.9 466.6 L680.8 466.1 L681.8 465.7 L682.8 465.3 L683.8 465.0 L684.8 464.6 L685.8 464.3 L686.8 464.0 L687.8 463.7 L688.8 463.4 L689.8 463.1 L693.8 450.7 L696.3 450.4 L698.7 450.1 L701.1 450.0 L703.5 449.9 L705.9 449.9 L707.0 462.0 L708.0 462.1 L709.0 462.3 L709.9 462.4 L710.9 462.6 L711.8 462.8 L712.7 463.0 L713.7 463.3 L714.6 463.6 L715.5 463.9 L716.3 464.2 L717.2 464.5 L728.1 455.3 L730.0 456.3 L731.9 457.5 L733.8 458.7 L735.5 460.0 L737.2 461.3 L730.3 473.2 L730.9 473.8 L731.5 474.5 L732.0 475.2 L732.6 475.9 L733.1 476.6 L733.6 477.3 L734.1 478.1 L734.6 478.8 L735.1 479.6 L735.5 480.4 L735.9 481.2 L749.6 478.8 L750.3 480.9 L751.0 483.0 L751.5 485.2 L751.9 487.3 L752.2 489.6 L739.6 496.5 L739.6 497.5 L739.6 498.4 L739.6 499.4 L739.5 500.4 L739.4 501.3 L739.3 502.3 L739.2 503.3 L739.0 504.2 L738.9 505.2 L738.7 506.2 L738.5 507.1 L749.8 512.7 L748.9 515.0 L748.0 517.3 L747.0 519.6 L745.9 521.9 L744.7 524.1 L731.2 523.3 L730.6 524.2 L730.0 525.0 L729.4 525.9 L728.7 526.7 L728.0 527.6 L727.3 528.4 L726.6 529.2 L725.9 530.0 L725.1 530.8 L724.4 531.6 L723.6 532.3 L728.1 543.8 L726.0 545.5 L723.9 547.0 L721.7 548.5 L719.5 550.0 L717.2 551.3 Z"/>
<path fill="#ecdbdc" d="M759.6 607.8 L785.5 606.7 L783.7 625.2 L803.1 624.4 L800.8 649.5 L781.3 650.2 L779.4 669.0 L753.2 669.8 L755.2 651.1 L736.0 651.8 L738.6 626.9 L757.8 626.2 Z"/></g>
<g fill="#fff">
<path d="M309 584 C335 574,375 572,398 598 C406 607,411 618,413 628.5 L404.6 653.6 C385 659,360 660,340 649 C322 636,311 612,309 584 Z"/>
<path d="M406 530 C407 560,415 585,432.7 601.3 C445 590,470 560,480 530 Z"/>
<path d="M410 690 L413.5 677 C418 650,430 628,450 608 C475 585,520 568,575 568 L580 600 L564 597.8 C550 618,530 640,497 652 C470 658,445 664,430 677 L427 690 Z"/>
</g></svg>

<svg width="0" height="0" style="position:absolute"><defs><radialGradient id="gchk" cx="45%" cy="40%" r="60%"><stop offset="0" stop-color="#7fd07a"/><stop offset="0.75" stop-color="#4fae4a"/><stop offset="1" stop-color="#2f8a2f"/></radialGradient><symbol id="chk" viewBox="0 0 14 14"><circle cx="7" cy="7" r="6.6" fill="#3d9a3d"/><circle cx="7" cy="7" r="5.6" fill="url(#gchk)"/><circle cx="7" cy="7" r="4.9" fill="none" stroke="#b9e3b5" stroke-width="0.7" opacity="0.7"/><path d="M3.9 7.2 L6.1 9.3 L10.2 4.9" fill="none" stroke="#fff" stroke-width="1.9" stroke-linecap="round" stroke-linejoin="round"/></symbol></defs></svg>
<div id="hdr"></div><div id="orange"></div><div id="red"></div>
<!--HUD--><svg width="120" height="103" viewBox="0 0 120 103" style="position:absolute;left:0;top:0">
<ellipse cx="58" cy="51" rx="48.2" ry="45.9" fill="#fdfdfd" stroke="#1c3566" stroke-width="0.8"/>
<defs>
<path id="hudtop" d="M24.25 58.17 A34.5 34.5 0 1 1 91.75 58.17"/>
<path id="hudbot" d="M17.05 61.21 A42.2 42.2 0 0 0 98.95 61.21"/>
</defs>
<text font-family="Liberation Sans" font-size="8" fill="#2b2a70" stroke="#2b2a70" stroke-width="0.25"><textPath href="#hudtop" textLength="123" lengthAdjust="spacing">U.S. DEPARTMENT OF HOUSING</textPath></text>
<text font-family="Liberation Sans" font-size="7.6" fill="#2b2a70" stroke="#2b2a70" stroke-width="0.25"><textPath href="#hudbot" textLength="110" lengthAdjust="spacing">AND URBAN DEVELOPMENT</textPath></text>
<path fill="#2d2176" d="M41.4 28.6 L45.0 27.3 L45.0 53.3 L41.4 53.3 Z"/>
<rect fill="#8cc63f" x="41.4" y="53.9" width="3.6" height="23.7"/>
<path fill="#2d2176" d="M46.0 25.5 L49.7 24.2 L49.7 49.7 L46.0 49.7 Z"/>
<rect fill="#8cc63f" x="46.0" y="50.300000000000004" width="3.7" height="28.3"/>
<path fill="#2d2176" d="M50.2 22.3 L53.6 21.0 L53.6 46.3 L50.2 46.3 Z"/>
<rect fill="#8cc63f" x="50.2" y="46.9" width="3.4" height="32.2"/>
<path fill="#2d2176" d="M62.9 21.0 L66.3 22.3 L66.3 46.3 L62.9 46.3 Z"/>
<rect fill="#8cc63f" x="62.9" y="46.9" width="3.4" height="32.2"/>
<path fill="#2d2176" d="M67.0 24.2 L70.4 25.5 L70.4 49.7 L67.0 49.7 Z"/>
<rect fill="#8cc63f" x="67.0" y="50.300000000000004" width="3.4" height="28.3"/>
<path fill="#2d2176" d="M71.2 27.3 L74.7 28.6 L74.7 53.3 L71.2 53.3 Z"/>
<rect fill="#8cc63f" x="71.2" y="53.9" width="3.5" height="23.7"/>
<path fill="#2d2176" d="M54.6 54.3 L54.6 35.5 Q54.6 31.5 57.8 31.5 Q61 31.5 61 35.5 L61 54.3 Z"/>
<rect fill="#8cc63f" x="54.6" y="54.9" width="3.1" height="23.7"/><rect fill="#8cc63f" x="58.2" y="54.9" width="3.1" height="23.7"/>
<rect fill="#b9dc8a" x="57.7" y="54.9" width="0.5" height="23.7"/>
<path fill="#8cc63f" d="M32.40 46.60 L33.39 49.44 L36.39 49.50 L34.00 51.32 L34.87 54.20 L32.40 52.48 L29.93 54.20 L30.80 51.32 L28.41 49.50 L31.41 49.44 Z"/>
<path fill="#2d2176" d="M83.90 47.00 L84.89 49.84 L87.89 49.90 L85.50 51.72 L86.37 54.60 L83.90 52.88 L81.43 54.60 L82.30 51.72 L79.91 49.90 L82.91 49.84 Z"/>
</svg><!--/HUD-->
<!--RECOVERY--><svg width="100" height="100" viewBox="-1.02 -1.02 2.04 2.04" style="position:absolute;left:936px;top:0.5px">
<defs><clipPath id="s_flag"><path d="M-0.856 -0.038 L-0.854 -0.071 L-0.851 -0.104 L-0.846 -0.137 L-0.840 -0.169 L-0.833 -0.202 L-0.825 -0.234 L-0.815 -0.265 L-0.804 -0.297 L-0.792 -0.328 L-0.779 -0.358 L-0.764 -0.388 L-0.749 -0.417 L-0.732 -0.446 L-0.714 -0.474 L-0.695 -0.501 L-0.676 -0.527 L-0.655 -0.553 L-0.633 -0.578 L-0.610 -0.602 L-0.586 -0.625 L-0.562 -0.647 L-0.536 -0.668 L-0.510 -0.689 L-0.483 -0.708 L-0.455 -0.726 L-0.427 -0.743 L-0.398 -0.759 L-0.368 -0.774 L-0.338 -0.787 L-0.308 -0.800 L-0.276 -0.811 L-0.245 -0.821 L-0.213 -0.830 L-0.181 -0.838 L-0.148 -0.844 L-0.116 -0.849 L-0.083 -0.853 L-0.050 -0.856 L-0.017 -0.857 L0.017 -0.857 L0.050 -0.856 L0.083 -0.853 L0.116 -0.849 L0.148 -0.844 L0.181 -0.838 L0.213 -0.830 L0.245 -0.821 L0.276 -0.811 L0.308 -0.800 L0.338 -0.787 L0.368 -0.774 L0.398 -0.759 L0.427 -0.743 L0.455 -0.726 L0.483 -0.708 L0.510 -0.689 L0.536 -0.668 L0.562 -0.647 L0.586 -0.625 L0.610 -0.602 L0.633 -0.578 L0.655 -0.553 L0.676 -0.527 L0.695 -0.501 L0.714 -0.474 L0.732 -0.446 L0.749 -0.417 L0.764 -0.388 L0.779 -0.358 L0.792 -0.328 L0.804 -0.297 L0.815 -0.265 L0.825 -0.234 L0.833 -0.202 L0.840 -0.169 L0.846 -0.137 L0.851 -0.104 L0.854 -0.071 L0.856 -0.038 Z"/></clipPath><clipPath id="s_green"><path d="M-0.856 0.038 L-0.854 0.071 L-0.851 0.103 L-0.846 0.136 L-0.840 0.168 L-0.833 0.200 L-0.825 0.231 L-0.816 0.263 L-0.805 0.294 L-0.793 0.324 L-0.780 0.354 L-0.766 0.384 L-0.751 0.413 L-0.735 0.441 L-0.717 0.469 L-0.699 0.496 L-0.680 0.522 L-0.659 0.548 L-0.638 0.573 L-0.615 0.596 L-0.592 0.620 L-0.568 0.642 L-0.543 0.663 L-0.517 0.683 L-0.491 0.702 L-0.464 0.721 L-0.436 0.738 L-0.408 0.754 L-0.378 0.769 L-0.349 0.783 L-0.319 0.796 L-0.288 0.807 L-0.257 0.818 L-0.226 0.827 L-0.194 0.835 L-0.162 0.842 L-0.130 0.847 L-0.097 0.851 L-0.065 0.855 L-0.032 0.856 L-0.032 0.038 Z"/></clipPath><clipPath id="s_red"><path d="M0.856 0.038 L0.854 0.071 L0.851 0.103 L0.846 0.136 L0.840 0.168 L0.833 0.200 L0.825 0.231 L0.816 0.263 L0.805 0.294 L0.793 0.324 L0.780 0.354 L0.766 0.384 L0.751 0.413 L0.735 0.441 L0.717 0.469 L0.699 0.496 L0.680 0.522 L0.659 0.548 L0.638 0.573 L0.615 0.596 L0.592 0.620 L0.568 0.642 L0.543 0.663 L0.517 0.683 L0.491 0.702 L0.464 0.721 L0.436 0.738 L0.408 0.754 L0.378 0.769 L0.349 0.783 L0.319 0.796 L0.288 0.807 L0.257 0.818 L0.226 0.827 L0.194 0.835 L0.162 0.842 L0.130 0.847 L0.097 0.851 L0.065 0.855 L0.032 0.856 L0.032 0.038 Z"/></clipPath></defs>
<circle cx="0" cy="0" r="0.975" fill="#fff" stroke="#233e6d" stroke-width="0.05"/>
<path fill="#233e6d" d="M-0.856 -0.038 L-0.854 -0.071 L-0.851 -0.104 L-0.846 -0.137 L-0.840 -0.169 L-0.833 -0.202 L-0.825 -0.234 L-0.815 -0.265 L-0.804 -0.297 L-0.792 -0.328 L-0.779 -0.358 L-0.764 -0.388 L-0.749 -0.417 L-0.732 -0.446 L-0.714 -0.474 L-0.695 -0.501 L-0.676 -0.527 L-0.655 -0.553 L-0.633 -0.578 L-0.610 -0.602 L-0.586 -0.625 L-0.562 -0.647 L-0.536 -0.668 L-0.510 -0.689 L-0.483 -0.708 L-0.455 -0.726 L-0.427 -0.743 L-0.398 -0.759 L-0.368 -0.774 L-0.338 -0.787 L-0.308 -0.800 L-0.276 -0.811 L-0.245 -0.821 L-0.213 -0.830 L-0.181 -0.838 L-0.148 -0.844 L-0.116 -0.849 L-0.083 -0.853 L-0.050 -0.856 L-0.017 -0.857 L0.017 -0.857 L0.050 -0.856 L0.083 -0.853 L0.116 -0.849 L0.148 -0.844 L0.181 -0.838 L0.213 -0.830 L0.245 -0.821 L0.276 -0.811 L0.308 -0.800 L0.338 -0.787 L0.368 -0.774 L0.398 -0.759 L0.427 -0.743 L0.455 -0.726 L0.483 -0.708 L0.510 -0.689 L0.536 -0.668 L0.562 -0.647 L0.586 -0.625 L0.610 -0.602 L0.633 -0.578 L0.655 -0.553 L0.676 -0.527 L0.695 -0.501 L0.714 -0.474 L0.732 -0.446 L0.749 -0.417 L0.764 -0.388 L0.779 -0.358 L0.792 -0.328 L0.804 -0.297 L0.815 -0.265 L0.825 -0.234 L0.833 -0.202 L0.840 -0.169 L0.846 -0.137 L0.851 -0.104 L0.854 -0.071 L0.856 -0.038 Z"/>
<path fill="#5c9a3e" d="M-0.856 0.038 L-0.854 0.071 L-0.851 0.103 L-0.846 0.136 L-0.840 0.168 L-0.833 0.200 L-0.825 0.231 L-0.816 0.263 L-0.805 0.294 L-0.793 0.324 L-0.780 0.354 L-0.766 0.384 L-0.751 0.413 L-0.735 0.441 L-0.717 0.469 L-0.699 0.496 L-0.680 0.522 L-0.659 0.548 L-0.638 0.573 L-0.615 0.596 L-0.592 0.620 L-0.568 0.642 L-0.543 0.663 L-0.517 0.683 L-0.491 0.702 L-0.464 0.721 L-0.436 0.738 L-0.408 0.754 L-0.378 0.769 L-0.349 0.783 L-0.319 0.796 L-0.288 0.807 L-0.257 0.818 L-0.226 0.827 L-0.194 0.835 L-0.162 0.842 L-0.130 0.847 L-0.097 0.851 L-0.065 0.855 L-0.032 0.856 L-0.032 0.038 Z"/>
<path fill="#a42a2e" d="M0.856 0.038 L0.854 0.071 L0.851 0.103 L0.846 0.136 L0.840 0.168 L0.833 0.200 L0.825 0.231 L0.816 0.263 L0.805 0.294 L0.793 0.324 L0.780 0.354 L0.766 0.384 L0.751 0.413 L0.735 0.441 L0.717 0.469 L0.699 0.496 L0.680 0.522 L0.659 0.548 L0.638 0.573 L0.615 0.596 L0.592 0.620 L0.568 0.642 L0.543 0.663 L0.517 0.683 L0.491 0.702 L0.464 0.721 L0.436 0.738 L0.408 0.754 L0.378 0.769 L0.349 0.783 L0.319 0.796 L0.288 0.807 L0.257 0.818 L0.226 0.827 L0.194 0.835 L0.162 0.842 L0.130 0.847 L0.097 0.851 L0.065 0.855 L0.032 0.856 L0.032 0.038 Z"/>
<g clip-path="url(#s_flag)"><path fill="#fff" d="M-0.650 -0.825 L-0.621 -0.735 L-0.526 -0.735 L-0.603 -0.680 L-0.574 -0.590 L-0.650 -0.645 L-0.726 -0.590 L-0.697 -0.680 L-0.774 -0.735 L-0.679 -0.735 Z M-0.375 -0.825 L-0.346 -0.735 L-0.251 -0.735 L-0.328 -0.680 L-0.299 -0.590 L-0.375 -0.645 L-0.451 -0.590 L-0.422 -0.680 L-0.499 -0.735 L-0.404 -0.735 Z M-0.100 -0.825 L-0.071 -0.735 L0.024 -0.735 L-0.053 -0.680 L-0.024 -0.590 L-0.100 -0.645 L-0.176 -0.590 L-0.147 -0.680 L-0.224 -0.735 L-0.129 -0.735 Z M-0.650 -0.575 L-0.621 -0.485 L-0.526 -0.485 L-0.603 -0.430 L-0.574 -0.340 L-0.650 -0.395 L-0.726 -0.340 L-0.697 -0.430 L-0.774 -0.485 L-0.679 -0.485 Z M-0.375 -0.575 L-0.346 -0.485 L-0.251 -0.485 L-0.328 -0.430 L-0.299 -0.340 L-0.375 -0.395 L-0.451 -0.340 L-0.422 -0.430 L-0.499 -0.485 L-0.404 -0.485 Z M-0.100 -0.575 L-0.071 -0.485 L0.024 -0.485 L-0.053 -0.430 L-0.024 -0.340 L-0.100 -0.395 L-0.176 -0.340 L-0.147 -0.430 L-0.224 -0.485 L-0.129 -0.485 Z M-0.650 -0.320 L-0.621 -0.230 L-0.526 -0.230 L-0.603 -0.175 L-0.574 -0.085 L-0.650 -0.140 L-0.726 -0.085 L-0.697 -0.175 L-0.774 -0.230 L-0.679 -0.230 Z M-0.375 -0.320 L-0.346 -0.230 L-0.251 -0.230 L-0.328 -0.175 L-0.299 -0.085 L-0.375 -0.140 L-0.451 -0.085 L-0.422 -0.175 L-0.499 -0.230 L-0.404 -0.230 Z M-0.100 -0.320 L-0.071 -0.230 L0.024 -0.230 L-0.053 -0.175 L-0.024 -0.085 L-0.100 -0.140 L-0.176 -0.085 L-0.147 -0.175 L-0.224 -0.230 L-0.129 -0.230 Z"/></g>
<text x="0.06" y="-0.125" font-family="Liberation Sans" font-weight="bold" font-size="0.15" fill="#fff" textLength="0.74" lengthAdjust="spacingAndGlyphs">RECOVERY.GOV</text>
<g clip-path="url(#s_green)" fill="#fff"><path d="M-0.731 0.310 L-0.706 0.302 L-0.680 0.298 L-0.651 0.295 L-0.620 0.296 L-0.590 0.300 L-0.559 0.309 L-0.529 0.321 L-0.500 0.338 L-0.474 0.360 L-0.465 0.369 L-0.457 0.377 L-0.450 0.387 L-0.443 0.396 L-0.437 0.406 L-0.431 0.415 L-0.426 0.425 L-0.422 0.434 L-0.418 0.444 L-0.429 0.510 L-0.446 0.513 L-0.465 0.516 L-0.484 0.517 L-0.504 0.517 L-0.525 0.516 L-0.546 0.512 L-0.567 0.507 L-0.588 0.500 L-0.608 0.491 L-0.627 0.478 L-0.644 0.462 L-0.660 0.445 L-0.676 0.426 L-0.690 0.405 L-0.702 0.383 L-0.713 0.360 L-0.723 0.335 L-0.731 0.310 Z M-0.485 0.173 L-0.479 0.201 L-0.471 0.227 L-0.462 0.252 L-0.451 0.276 L-0.439 0.299 L-0.426 0.320 L-0.411 0.339 L-0.395 0.357 L-0.377 0.373 L-0.367 0.362 L-0.355 0.347 L-0.343 0.330 L-0.330 0.310 L-0.318 0.287 L-0.306 0.264 L-0.296 0.238 L-0.287 0.212 L-0.281 0.185 Z M-0.397 0.605 L-0.394 0.572 L-0.393 0.549 L-0.391 0.527 L-0.387 0.506 L-0.381 0.485 L-0.374 0.466 L-0.365 0.447 L-0.354 0.428 L-0.342 0.411 L-0.327 0.393 L-0.306 0.374 L-0.281 0.357 L-0.252 0.342 L-0.220 0.329 L-0.184 0.318 L-0.145 0.309 L-0.104 0.304 L-0.059 0.301 L-0.013 0.302 L0.012 0.387 L-0.030 0.380 L-0.040 0.397 L-0.052 0.414 L-0.065 0.431 L-0.079 0.448 L-0.096 0.464 L-0.114 0.478 L-0.135 0.492 L-0.158 0.504 L-0.184 0.514 L-0.206 0.519 L-0.228 0.523 L-0.250 0.528 L-0.270 0.534 L-0.289 0.540 L-0.307 0.546 L-0.323 0.554 L-0.337 0.563 L-0.350 0.573 L-0.352 0.607 Z M-0.394 0.572 L-0.349 0.573 L-0.270 0.870 L-0.330 0.870 Z"/><ellipse cx="-0.38" cy="0.2" rx="0.095" ry="0.15"/></g>
<g clip-path="url(#s_red)"><path fill="#fff" d="M0.281 0.543 L0.279 0.530 L0.278 0.517 L0.278 0.505 L0.278 0.492 L0.234 0.469 L0.238 0.446 L0.245 0.423 L0.294 0.422 L0.299 0.410 L0.305 0.399 L0.312 0.388 L0.319 0.377 L0.294 0.335 L0.311 0.317 L0.329 0.301 L0.370 0.327 L0.381 0.320 L0.392 0.314 L0.404 0.308 L0.416 0.303 L0.418 0.254 L0.441 0.248 L0.465 0.244 L0.486 0.289 L0.499 0.289 L0.512 0.290 L0.524 0.291 L0.537 0.293 L0.565 0.253 L0.588 0.261 L0.610 0.270 L0.604 0.319 L0.615 0.326 L0.625 0.334 L0.635 0.342 L0.645 0.350 L0.690 0.332 L0.705 0.350 L0.718 0.370 L0.687 0.408 L0.692 0.420 L0.697 0.432 L0.701 0.444 L0.704 0.457 L0.753 0.466 L0.755 0.489 L0.755 0.513 L0.708 0.528 L0.706 0.541 L0.704 0.553 L0.701 0.566 L0.697 0.578 L0.733 0.612 L0.722 0.633 L0.709 0.654 L0.662 0.640 L0.653 0.650 L0.644 0.659 L0.635 0.668 L0.625 0.676 L0.637 0.724 L0.616 0.736 L0.594 0.747 L0.562 0.710 L0.549 0.713 L0.537 0.716 L0.524 0.719 L0.511 0.720 L0.495 0.767 L0.471 0.766 L0.448 0.763 L0.440 0.714 L0.428 0.711 L0.415 0.706 L0.404 0.701 L0.392 0.695 L0.354 0.726 L0.334 0.713 L0.316 0.697 L0.335 0.652 L0.327 0.642 L0.319 0.632 L0.312 0.621 L0.305 0.610 L0.256 0.615 L0.247 0.593 L0.240 0.570 Z M0.319 0.254 L0.312 0.257 L0.306 0.259 L0.299 0.261 L0.292 0.263 L0.285 0.296 L0.270 0.297 L0.255 0.296 L0.248 0.263 L0.241 0.261 L0.234 0.259 L0.228 0.257 L0.221 0.254 L0.197 0.277 L0.184 0.269 L0.172 0.259 L0.186 0.228 L0.181 0.223 L0.177 0.218 L0.173 0.212 L0.169 0.206 L0.136 0.210 L0.130 0.195 L0.126 0.181 L0.156 0.164 L0.155 0.157 L0.155 0.150 L0.155 0.143 L0.156 0.136 L0.126 0.119 L0.130 0.105 L0.136 0.090 L0.169 0.094 L0.173 0.088 L0.177 0.082 L0.181 0.077 L0.186 0.072 L0.172 0.041 L0.184 0.031 L0.196 0.023 L0.221 0.046 L0.228 0.043 L0.234 0.041 L0.241 0.039 L0.248 0.037 L0.255 0.004 L0.270 0.003 L0.285 0.004 L0.292 0.037 L0.299 0.039 L0.306 0.041 L0.312 0.043 L0.319 0.046 L0.344 0.023 L0.356 0.031 L0.368 0.041 L0.354 0.072 L0.359 0.077 L0.363 0.082 L0.367 0.088 L0.371 0.094 L0.404 0.090 L0.410 0.105 L0.414 0.119 L0.384 0.136 L0.385 0.143 L0.385 0.150 L0.385 0.157 L0.384 0.164 L0.414 0.181 L0.410 0.195 L0.404 0.210 L0.371 0.206 L0.367 0.212 L0.363 0.218 L0.359 0.223 L0.354 0.228 L0.368 0.259 L0.356 0.269 L0.344 0.277 Z"/><path fill="#a42a2e" d="M0.460 0.425 L0.527 0.425 L0.527 0.471 L0.574 0.471 L0.574 0.539 L0.527 0.539 L0.527 0.585 L0.460 0.585 L0.460 0.539 L0.413 0.539 L0.413 0.471 L0.460 0.471 Z"/></g>
</svg><!--/RECOVERY-->
<div class="abs" id="title">Recovery Act Management and Performance System ( RAMPS )</div>
<div class="abs" id="welcome">recipient, Welcome back!</div>
<div class="abs" id="logout"><a href="#">Logout</a></div>
<div class="abs" id="tabhome"><span>Home</span></div>
<div class="abs" id="tabnepa"><span>NEPA Reporting</span></div>
<div class="abs" id="help"><svg width="14" height="14" style="position:absolute;left:9.8px;top:9.8px" viewBox="0 0 14 14"><circle cx="7" cy="7" r="5.8" fill="none" stroke="#dfe8f5" stroke-width="1.3"/><text x="7" y="10.3" text-anchor="middle" font-family="Liberation Sans" font-weight="bold" font-size="9" fill="#e8eef8">?</text></svg><a href="#" style="position:absolute;left:28.5px;top:10px;font-size:12.5px;font-weight:bold;color:#fff;line-height:16px">Help</a></div>

<div class="abs" id="bc"><a href="#">Home</a> &nbsp;&raquo; <a href="#">Award List</a> &nbsp;&raquo; <a href="#">Environmental Review Project List</a> &nbsp;&raquo;&nbsp; Section Overview</div>
<div class="abs" id="h1">Section Overview</div>
<div class="abs" id="omb">OMB CONTROL NUMBER: 2506-018<br><span style="letter-spacing:0.37px">EXPIRATION DATE: 12/31/2009</span></div>

<div class="abs" id="nav">
 <div class="hd"><span>Section Overview</span></div>
 <div class="ni" style="top:37px;height:37px"><a href="#">Recipient Information</a></div>
 <div class="ni" style="top:74px;height:53px"><a href="#" style="width:200px">Environmental Review Project Information</a></div>
 <div class="ni" style="top:127px;height:37px"><a href="#"><span style="letter-spacing:-0.9px">NEPA</span> Review Level</a></div>
 <div class="ni" style="top:164px;height:37px"><a href="#">Environmental Reviews</a></div>
 <div class="ni" style="top:201px;height:37px"><a href="#">Environmental Review Status</a></div>
 <div class="ni" style="top:238px;height:37px"><a href="#">Section Review and Submission</a></div>
</div>

<div class="abs" id="info">Section Overview provides a quick look at the status of all sections. The Section Overview also allows the user to visit a<br><span style="letter-spacing:0.035px">section of the form for completion or review. Possible section statuses are New, Incomplete, Complete and Not Required.</span><br><br><br>Ensure that all sections below are marked "Complete". Any incomplete sections should be completed before submission.<br><br>Completion status on the Section Overview page refers to completed sections and not completed environmental review<br>projects.</div>
<div class="abs" id="last">Last Submitted: Not Submitted</div>

<div class="abs" style="left:294px;top:369px;width:710px;height:20px;background:#fff"></div>
<div class="abs" id="fs"></div>
<div class="abs" id="legend">Section Progress</div>
<div id="rows">
<div class="row" style="top:398px"><span class="t">Recipient Information</span><svg class="ic" viewBox="0 0 14 14"><use href="#chk"/></svg><span class="c">Complete</span><a class="v" href="#">Visit</a></div>
<div class="row" style="top:425px"><span class="t">Environmental Review Project Information</span><svg class="ic" viewBox="0 0 14 14"><use href="#chk"/></svg><span class="c">Complete</span><a class="v" href="#">Visit</a></div>
<div class="row" style="top:452px"><span class="t"><span style="letter-spacing:-0.5px">NEPA</span> Review Level</span><svg class="ic" viewBox="0 0 14 14"><use href="#chk"/></svg><span class="c">Complete</span><a class="v" href="#">Visit</a></div>
<div class="row" style="top:479px"><span class="t">Environmental Reviews</span><svg class="ic" viewBox="0 0 14 14"><use href="#chk"/></svg><span class="c">Complete</span><a class="v" href="#">Visit</a></div>
<div class="row" style="top:506px"><span class="t">Environmental Review Status</span><svg class="ic" viewBox="0 0 14 14"><use href="#chk"/></svg><span class="c">Complete</span><a class="v" href="#">Visit</a></div>
</div>
</body></html>
